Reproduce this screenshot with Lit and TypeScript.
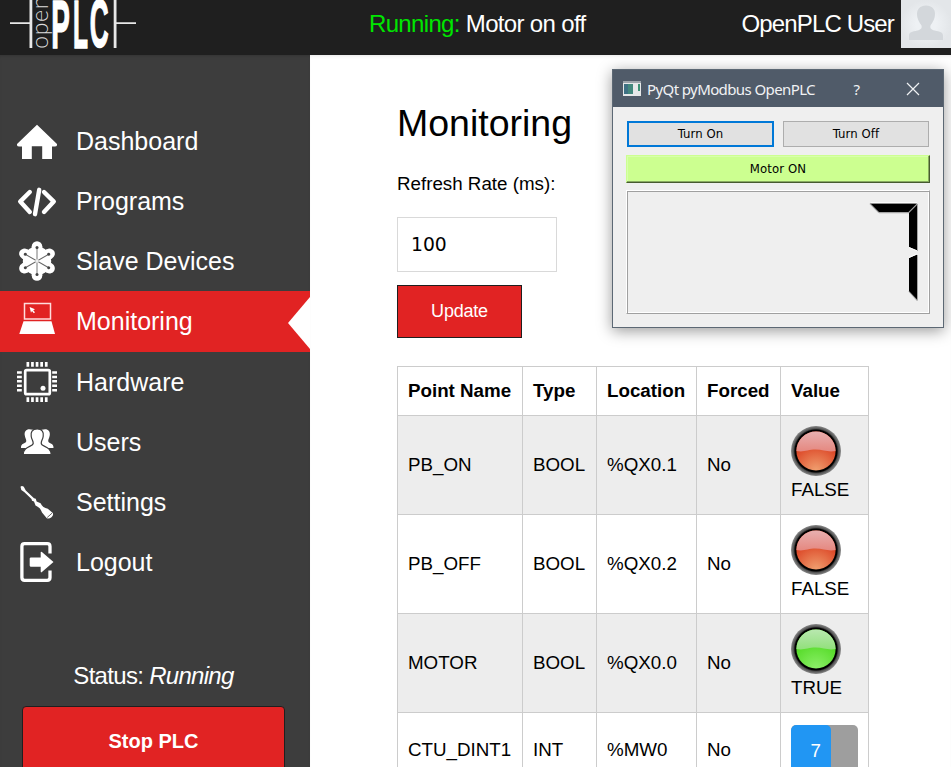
import { LitElement, html, svg, css } from "lit";
import { customElement, property } from "lit/decorators.js";

const pins = [0, 1, 2, 3, 4];
const arms = [0, 60, 120, 180, 240, 300];

const icons: Record<string, unknown> = {
  Dashboard: svg`<path d="M20 3.800 40 23q.5 2.600-2.400 2.500H35V38H25.200V25.200H14.800V38H5V25.500H2.400Q-.5 25.600 0 23Z"/>`,
  Programs: svg`<g fill="none" stroke="#fff" stroke-width="4.400" stroke-linecap="round" stroke-linejoin="round">
    <path d="M12.800 11 3.200 20.600 12.800 31M27 11 36.800 20.600 27 31"/><path d="M22.200 8.800 18 33.200"/></g>`,
  "Slave Devices": svg`<circle cx="20" cy="20" r="14.200"/>
    ${arms.map((a) => svg`<g transform="rotate(${a} 20 20)"><circle cx="20" cy="5.500" r="5.300"/><path d="M14.700 5.500h10.600V20H14.700z"/></g>`)}
    ${arms.map((a) => svg`<g transform="rotate(${a} 20 20)"><path d="M20 20V6.500" stroke="#666" stroke-width=".9"/><circle cx="20" cy="6.500" r="1.500" fill="#444"/></g>`)}
    <circle cx="20" cy="20" r="1.800" fill="#eee"/>`,
  Monitoring: svg`<rect x="7.500" y="1.500" width="26" height="15.500" fill="none" stroke="#ffdcdc" stroke-width="1.500"/>
    <path d="M6.500 19.200h28L38 32H2.300Z"/><path d="M12.600 5 18 7.200 16.200 8.300 18 10.300 16.800 11.200 15 9 14 10.700Z"/>`,
  Hardware: svg`<rect x="8.200" y="8.200" width="24.600" height="24" rx="1.500" fill="none" stroke="#fff" stroke-width="2.700"/>
    <circle cx="26" cy="26.200" r="2.500"/>
    ${pins.map((i) => svg`<path d="M${9.500 + i * 4.600} 0h2.700v4.800h-2.700zM${9.500 + i * 4.600} 35.200h2.700V40h-2.700zM0 ${9.300 + i * 4.400}h4.800v2.500H0zM35.200 ${9.300 + i * 4.400}H40v2.500h-4.800z"/>`)}`,
  Users: svg`<path d="M16 7.800c-6-2-8.800.8-8.300 5.200.3 3.200 2 4.500 1.500 6.500-.6 2.200-5.700 1.500-5.200 6.500h12zM24.500 7.800c6-2 8.800.8 8.300 5.200-.3 3.200-2 4.500-1.500 6.500.6 2.200 5.700 1.500 5.200 6.500h-12z"/>
    <path d="M20.200 7c-5.200 0-6.600 3.200-6 7.200.4 3.300 2 4.700 2 7 0 4-10 2.500-10 11.500h28c0-9-10-7.500-10-11.500 0-2.300 1.600-3.700 2-7 .6-4-.8-7.200-6-7.200z" stroke="#3d3d3d" stroke-width="1.200"/>`,
  Settings: svg`<path d="M3.500 4.800q1.300-1.800 3.300 0l2 3.600L17 16.300l1.800.5.800 2.600 4 1.800c1.200 3 4 4.800 7.200 5.600l5 4.300q1 1.700-1.300 4.200-2.500 1.800-4.700.9L25 30.500c-1.300-3.700-3-5.500-6.500-7l-1.500-3.900-2-.8-.5-1.700L7.200 10 4.300 7.900Z"/><path d="M35.200 31l-5 4.500" stroke="#3d3d3d" stroke-width=".8"/>`,
  Logout: svg`<path d="M33 11.500V4.500Q33 1.700 30.200 1.700H7.600Q4.900 1.700 4.900 4.500v31q0 2.800 2.700 2.800h22.600Q33 38.300 33 35.500v-7" fill="none" stroke="#fff" stroke-width="3.300"/>
    <path d="M14 15.500h9.700v-5q0-1.500 1.200-.4L36.500 20 24.900 30q-1.200 1-1.200-.4v-4.800H14q-1.300 0-1.300-1.200v-7q0-1.100 1.300-1.100z"/>`,
};

@customElement("status-led")
class StatusLed extends LitElement {
  @property({ type: Boolean }) on = false;
  static styles = css`
    :host { display: block; width: 50px; height: 50px; }
    svg { display: block; }
  `;
  render() {
    const [low, mid] = this.on ? ["#8df06a", "#58dc2b"] : ["#f0a070", "#dd4b2a"];
    const [top, bottom] = this.on ? ["#b9e8b0", "#92e07c"] : ["#e8b0b0", "#e58880"];
    return html`<svg width="50" height="50" viewBox="0 0 50 50">
      <defs>
        <radialGradient id="glow" cx=".5" cy="1" r=".65"><stop offset="0" stop-color=${low} /><stop offset="1" stop-color=${mid} /></radialGradient>
        <linearGradient id="gloss" x1="0" y1="0" x2="0" y2="1"><stop offset="0" stop-color=${top} /><stop offset="1" stop-color=${bottom} /></linearGradient>
        <radialGradient id="ring" cx=".5" cy=".5" r=".5"><stop offset=".84" stop-color="#000" /><stop offset=".89" stop-color="#505050" /><stop offset="1" stop-color="#8b8b8b" /></radialGradient>
      </defs>
      <circle cx="25" cy="25" r="25" fill="url(#ring)" />
      <circle cx="25" cy="25" r="19.600" fill="url(#glow)" />
      <path d="M5.400 25a19.600 19.600 0 0 1 39.200 0c-8 1.500-12-1.400-20-1.400S13 26.500 5.400 25z" fill="url(#gloss)" />
    </svg>`;
  }
}

@customElement("modbus-window")
class ModbusWindow extends LitElement {
  static styles = css`
    :host {
      display: flex; flex-direction: column; box-sizing: border-box;
      width: 332px; height: 259px; border: 1px solid #5c6874; background: #efefef;
      box-shadow: 0 3px 14px rgba(0, 0, 0, 0.4);
      font: 13px/16px "DejaVu Sans Condensed", "DejaVu Sans", sans-serif;
      font-stretch: condensed; letter-spacing: 0.1px; color: #000;
    }
    .title { display: flex; flex: none; align-items: center; height: 37px; background: #505b69; color: #f0f2f4; padding: 0 23px 0 10px; }
    .caption { font: 15px/20px "Noto Sans", "Open Sans", sans-serif; letter-spacing: -0.6px; margin: 0 auto 0 6px; white-space: nowrap; }
    .help { font: 15px/20px "Noto Sans", sans-serif; margin-right: 46px; }
    .body { display: flex; flex-direction: column; gap: 7px; padding: 14px 13px 12px; }
    .buttons { display: flex; gap: 9px; padding: 0 1px; margin-bottom: 1px; }
    .btn { box-sizing: border-box; flex: 1; height: 26px; display: grid; place-items: center; background: #e1e1e1; border: 1px solid #adadad; }
    .btn.focus { flex: 0 0 147px; border: 2px solid #0078d7; }
    .motor {
      box-sizing: border-box; height: 28px; display: grid; place-items: center; background: #ccff90;
      border: 1px solid; border-color: #ccff90 #465a30 #465a30 #ccff90;
      box-shadow: inset -1px -1px #88aa60, inset 1px 1px #d8ffab;
    }
    .lcd {
      box-sizing: border-box; height: 124px; border: 1px solid; border-color: #fff #a0a0a0 #a0a0a0 #fff;
      box-shadow: inset 1px 1px #a0a0a0, inset -1px -1px #fff; display: flex; justify-content: flex-end; padding: 11px 11px 0 0;
    }
    svg { display: block; }
  `;
  render() {
    return html`
      <div class="title">
        <svg width="18" height="15"><rect width="18" height="15" fill="#e6e8e9" /><rect width="18" height="2" fill="#9ca3aa" /><rect x="1" y="3" width="9" height="10" fill="#43887d" /><rect x="1" y="3" width="4" height="10" fill="#3e7184" /><rect x="15" y="3" width="2" height="7" fill="#3c9174" /></svg>
        <span class="caption">PyQt pyModbus OpenPLC</span>
        <span class="help">?</span>
        <svg width="14" height="14" viewBox="0 0 14 14"><path d="M1 1 13 13M13 1 1 13" stroke="#f0f2f4" stroke-width="1.200" /></svg>
      </div>
      <div class="body">
        <div class="buttons"><div class="btn focus">Turn On</div><div class="btn">Turn Off</div></div>
        <div class="motor">Motor ON</div>
        <div class="lcd">
          <svg width="49" height="100" viewBox="0 0 49 100">
            <path d="M10 10.500H40M48.500 2V49M48.500 53V98.500M40 10.500 48.500 2M1 1.500 10 10.500M40 89 48.500 98.500" stroke="#a5a5a5" fill="none" stroke-width="1.500" />
            <path d="M1.500 1.500H48L39.500 10H10ZM48 3V48.500L40 45V11ZM40 56 48 52.500V97.500L40 89Z" />
            <path d="M2 .7H48M40 45.500 48 48.800M40 55.500 48 52" stroke="#fff" />
          </svg>
        </div>
      </div>`;
  }
}

interface Point { name: string; type: string; location: string; value: boolean | number; }

const points: Point[] = [
  { name: "PB_ON", type: "BOOL", location: "%QX0.1", value: false },
  { name: "PB_OFF", type: "BOOL", location: "%QX0.2", value: false },
  { name: "MOTOR", type: "BOOL", location: "%QX0.0", value: true },
  { name: "CTU_DINT1", type: "INT", location: "%MW0", value: 7 },
];

@customElement("app-root")
class AppRoot extends LitElement {
  static styles = css`
    :host { display: flex; flex-direction: column; position: relative; width: 951px; height: 767px; overflow: hidden; background: #fff; color: #000; font-family: "Liberation Sans", Arial, sans-serif; }
    * { box-sizing: border-box; }
    svg { display: block; flex: none; }
    header { display: flex; height: 55px; flex: none; background: #1f1f1f; color: #fff; font-size: 24px; letter-spacing: -0.66px; align-items: flex-start; white-space: nowrap; }
    header span { line-height: 48px; }
    .program { margin-left: 231px; }
    .program b { font-weight: normal; color: #00e600; }
    .user { margin-left: auto; margin-right: 7px; letter-spacing: -0.85px; }
    .columns { display: flex; flex: 1; min-height: 0; }
    aside { width: 310px; flex: none; background: #3d3d3d; color: #fff; padding-top: 56px; box-shadow: inset 0 3px 4px -3px rgba(0,0,0,.25); }
    .item { display: flex; align-items: center; height: 60px; padding-left: 17px; font-size: 25px; gap: 19px; }
    .item svg { fill: #fff; }
    .item.active { height: 61px; background: #e12323; }
    .item .notch { margin-left: auto; margin-top: 2px; }
    .status { margin-top: 70px; height: 28px; line-height: 28px; text-align: center; font-size: 24px; letter-spacing: -0.7px; padding-right: 3px; }
    .stop { margin: 16px 25px 0 22px; height: 70px; border: 1px solid #1f1f1f; border-radius: 4px; background: #e12323; display: grid; place-items: center; font-size: 20px; font-weight: bold; }
    main { padding-left: 87px; font-size: 18.750px; flex: 1; box-shadow: inset 0 3px 4px -3px rgba(0,0,0,.15); }
    h1 { margin: 45px 0 24px; font-size: 37.500px; line-height: 46px; font-weight: normal; }
    .label { height: 28px; line-height: 28px; }
    .input { margin-top: 19px; width: 160px; height: 55px; border: 1px solid #d9d9d9; padding-left: 13px; display: flex; align-items: center; font: 18.750px "DejaVu Sans", sans-serif; }
    .update { margin: 13px 0 28px; width: 125px; height: 53px; background: #e12323; border: 1px solid #1f1f1f; color: #fff; display: grid; place-items: center; font-size: 18px; letter-spacing: -0.2px; }
    table { width: 472px; table-layout: fixed; border-collapse: separate; border-spacing: 0; border: solid #ccc; border-width: 1px 0 0 1px; line-height: 28px; }
    th, td { padding: 10px 0 10px 10px; text-align: left; border: solid #ccc; border-width: 0 1px 1px 0; white-space: nowrap; }
    th { height: 49px; }
    .c1 { width: 125px; } .c2 { width: 74px; } .c3 { width: 100px; } .c4 { width: 84px; } .c5 { width: 88px; }
    tbody tr:nth-child(odd) { background: #ededed; }
    .bar { width: 67px; height: 50px; background: #9e9e9e; border-radius: 5px; margin: 2px 0; overflow: hidden; }
    .fill { height: 100%; background: #2196f3; color: #fff; line-height: 52px; text-align: right; padding-right: 10px; border-radius: 5px; }
    .floating { position: absolute; left: 612px; top: 69px; }
  `;

  renderValue(v: boolean | number) {
    return typeof v === "number"
      ? html`<div class="bar"><div class="fill" style="width:40px">${v}</div></div>`
      : html`<status-led ?on=${v}></status-led>${v ? "TRUE" : "FALSE"}`;
  }

  render() {
    return html`
      <header>
        <svg width="138" height="55" viewBox="0 0 138 55" fill="#fff">
          <path d="M10 22.200h19.500V0h2.800v48h-2.800V24H10zM136 22.200h-19.500V0h-2.800v48h2.800V24H136z" fill="#e8e8e8" />
          <text transform="translate(48 48.800) rotate(-90)" font-family="Lato" font-weight="300" font-size="23" letter-spacing=".7" fill="#ddd">open</text>
          <g font-family="Liberation Sans" font-weight="bold" font-size="68" stroke="#fff" stroke-width="1.500" letter-spacing="0">
            <text transform="translate(51.200 47.500) scale(.41 1)">P</text>
            <text transform="translate(73 47.500) scale(.36 1)">L</text>
            <text transform="translate(89.800 47.200) scale(.385 1)">C</text>
          </g>
        </svg>
        <span class="program"><b>Running:</b> Motor on off</span>
        <span class="user">OpenPLC User</span>
        <svg width="50" height="48" viewBox="0 0 50 48">
          <defs><radialGradient id="photo"><stop offset=".4" stop-color="#eef1f4" /><stop offset="1" stop-color="#e3e6e9" /></radialGradient></defs>
          <rect width="50" height="48" fill="url(#photo)" />
          <path d="M25 5.600c-6 0-9 3.600-9 8.500 0 5 2.500 8.500 4.500 11.500.8 3-1 4.200-4 5C11 32 8 32 8 36v4h34v-4c0-4-3-4-8.500-5.400-3-.8-4.800-2-4-5 2-3 4.500-6.500 4.500-11.500 0-4.900-3-8.500-9-8.500z" fill="#d3d7db" />
        </svg>
      </header>
      <div class="columns">
        <aside>
          <nav>
            ${Object.entries(icons).map(([name, art]) => html`
              <div class="item ${name === "Monitoring" ? "active" : ""}">
                <svg width="40" height="40" viewBox="0 0 40 40">${art}</svg>
                <span>${name}</span>
                ${name === "Monitoring" ? html`<svg class="notch" width="22" height="52"><path d="M22 0 0 26 22 52Z" /></svg>` : ""}
              </div>`)}
          </nav>
          <div class="status">Status: <i>Running</i></div>
          <div class="stop">Stop PLC</div>
        </aside>
        <main>
          <h1>Monitoring</h1>
          <div class="label">Refresh Rate (ms):</div>
          <div class="input">100</div>
          <div class="update">Update</div>
          <table>
            <thead><tr><th class="c1">Point Name</th><th class="c2">Type</th><th class="c3">Location</th><th class="c4">Forced</th><th class="c5">Value</th></tr></thead>
            <tbody>
              ${points.map((p) => html`<tr><td>${p.name}</td><td>${p.type}</td><td>${p.location}</td><td>No</td><td>${this.renderValue(p.value)}</td></tr>`)}
            </tbody>
          </table>
        </main>
      </div>
      <modbus-window class="floating"></modbus-window>`;
  }
}
